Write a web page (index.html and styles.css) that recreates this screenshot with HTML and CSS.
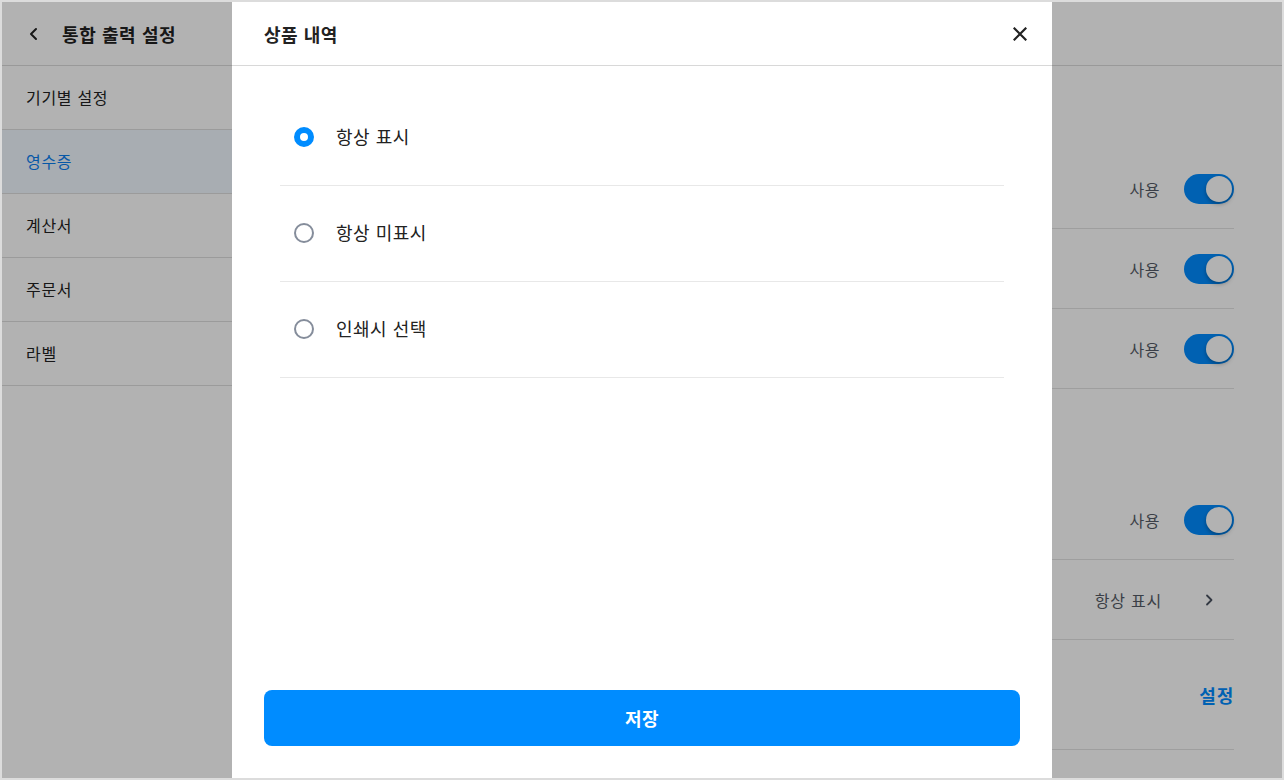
FILE: index.html
```html
<!DOCTYPE html>
<html lang="ko">
<head>
<meta charset="utf-8">
<title>통합 출력 설정</title>
<link rel="stylesheet" href="styles.css">
</head>
<body>
<div class="frame">
  <div class="app">
    <header class="topbar">
      <span class="back">
        <svg width="12" height="14" viewBox="0 0 12 14"><path d="M8 2 L3 7 L8 12" fill="none" stroke="#222" stroke-width="2" stroke-linecap="round" stroke-linejoin="round"/></svg>
      </span>
      <h1 class="top-title">통합 출력 설정</h1>
    </header>
    <div class="layout">
      <nav class="sidebar">
        <div class="nav-item">기기별 설정</div>
        <div class="nav-item active">영수증</div>
        <div class="nav-item">계산서</div>
        <div class="nav-item">주문서</div>
        <div class="nav-item">라벨</div>
      </nav>
      <main class="content">
        <section class="section first">
          <h2 class="section-title">기본 설정</h2>
          <div class="row"><span class="label">매장명</span><span class="value">사용</span><span class="toggle"><span class="knob"></span></span></div>
          <div class="row"><span class="label">사업자 정보</span><span class="value">사용</span><span class="toggle"><span class="knob"></span></span></div>
          <div class="row"><span class="label">주문 번호</span><span class="value">사용</span><span class="toggle"><span class="knob"></span></span></div>
        </section>
        <section class="section second">
          <h2 class="section-title">상세 설정</h2>
          <div class="row"><span class="label">결제 정보</span><span class="value">사용</span><span class="toggle"><span class="knob"></span></span></div>
          <div class="row"><span class="label">상품 내역</span><span class="value value-link">항상 표시</span>
            <span class="chev"><svg width="10" height="14" viewBox="0 0 10 14"><path d="M3 2.5 L7.5 7 L3 11.5" fill="none" stroke="#4a5260" stroke-width="1.8" stroke-linecap="round" stroke-linejoin="round"/></svg></span>
          </div>
          <div class="row tall"><span class="label">하단 문구</span><span class="link">설정</span></div>
        </section>
      </main>
    </div>
    <div class="dim"></div>
    <div class="modal">
      <div class="modal-head">
        <h2 class="modal-title">상품 내역</h2>
        <button class="close" aria-label="닫기">
          <svg width="14" height="14" viewBox="0 0 14 14"><path d="M1.5 1.5 L12.5 12.5 M12.5 1.5 L1.5 12.5" stroke="#222" stroke-width="2.2" stroke-linecap="square"/></svg>
        </button>
      </div>
      <ul class="options">
        <li class="option"><span class="radio checked"></span><span class="opt-text">항상 표시</span></li>
        <li class="option"><span class="radio"></span><span class="opt-text">항상 미표시</span></li>
        <li class="option"><span class="radio"></span><span class="opt-text">인쇄시 선택</span></li>
      </ul>
      <div class="modal-foot">
        <button class="save">저장</button>
      </div>
    </div>
  </div>
</div>
</body>
</html>
```
FILE: styles.css
```css
* { box-sizing: border-box; }
html, body { margin: 0; padding: 0; }
body {
  font-family: "Noto Sans CJK KR", "Noto Sans", sans-serif;
  color: #222;
  background: #fff;
  letter-spacing: 0.5px;
}
.frame {
  width: 1284px;
  height: 780px;
  border: 2px solid #dcdcdc;
  overflow: hidden;
}
.app {
  position: relative;
  width: 1280px;
  height: 776px;
  background: #fff;
  display: flex;
  flex-direction: column;
}
.topbar {
  height: 64px;
  flex: none;
  display: flex;
  align-items: center;
  padding-left: 26px;
  border-bottom: 1px solid #dcdcdc;
}
.back { display: flex; width: 12px; height: 14px; margin-right: 22px; }
.top-title { margin: 0; font-size: 18px; font-weight: 700; letter-spacing: 0.6px; }
.layout { flex: 1; display: flex; min-height: 0; }
.sidebar {
  width: 230px;
  flex: none;
}
.nav-item {
  height: 64px;
  display: flex;
  align-items: center;
  padding-left: 24px;
  padding-bottom: 2px;
  font-size: 16px;
  letter-spacing: 0.7px;
  color: #222;
  border-bottom: 1px solid #dedede;
}
.nav-item.active { background: #f1f8ff; color: #0a7ef0; }
.content { flex: 1; padding: 0 48px 0 32px; }
.section-title { margin: 0; font-size: 16px; font-weight: 700; color: #222; }
.section.first .section-title { height: 83px; padding-top: 30px; }
.section.second .section-title { height: 91px; padding-top: 36px; }
.row {
  height: 80px;
  display: flex;
  align-items: center;
  border-bottom: 1px solid #e2e2e2;
  font-size: 16px;
}
.row.tall { height: 110px; }
.label { flex: 1; color: #222; }
.value { color: #555b66; margin-right: 24px; }
.value-link { margin-right: 0; letter-spacing: 0.8px; }
.toggle {
  position: relative;
  width: 50px;
  height: 30px;
  border-radius: 15px;
  background: #008cff;
}
.knob {
  position: absolute;
  top: 2px;
  right: 2px;
  width: 26px;
  height: 26px;
  border-radius: 50%;
  background: #fff;
  box-shadow: 0 2px 4px rgba(0,0,0,0.3);
}
.chev { display: flex; width: 10px; height: 14px; margin-right: 20px; margin-left: 42px; }
.link { color: #008cff; font-weight: 700; font-size: 18px; letter-spacing: 0.8px; }
.dim {
  position: absolute;
  inset: 0;
  background: rgba(0,0,0,0.3);
}
.modal {
  position: absolute;
  top: 0;
  left: 230px;
  width: 820px;
  height: 776px;
  background: #fff;
  display: flex;
  flex-direction: column;
}
.modal-head {
  height: 64px;
  flex: none;
  display: flex;
  align-items: center;
  justify-content: space-between;
  padding: 0 20px 0 32px;
  border-bottom: 1px solid #d8d8d8;
}
.modal-title { margin: 0; font-size: 18px; font-weight: 700; letter-spacing: 0.5px; }
.close {
  width: 24px;
  height: 24px;
  border: 0;
  padding: 0;
  background: none;
  display: flex;
  align-items: center;
  justify-content: center;
}
.options {
  list-style: none;
  margin: 0;
  padding: 24px 48px 0;
  flex: 1;
}
.option {
  height: 96px;
  display: flex;
  align-items: center;
  padding-left: 14px;
  padding-bottom: 1px;
  border-bottom: 1px solid #e8e8e8;
}
.radio {
  width: 20px;
  height: 20px;
  border-radius: 50%;
  border: 2px solid #858d9b;
  margin-right: 22px;
  flex: none;
}
.radio.checked { border: 6px solid #008cff; }
.opt-text { font-size: 18px; color: #222; padding-bottom: 2px; }
.modal-foot { padding: 0 32px 32px; }
.save {
  width: 100%;
  height: 56px;
  border: 0;
  border-radius: 8px;
  background: #008cff;
  color: #fff;
  font-family: inherit;
  font-size: 18px;
  font-weight: 700;
  letter-spacing: 0.5px;
  padding-bottom: 2px;
}
```
